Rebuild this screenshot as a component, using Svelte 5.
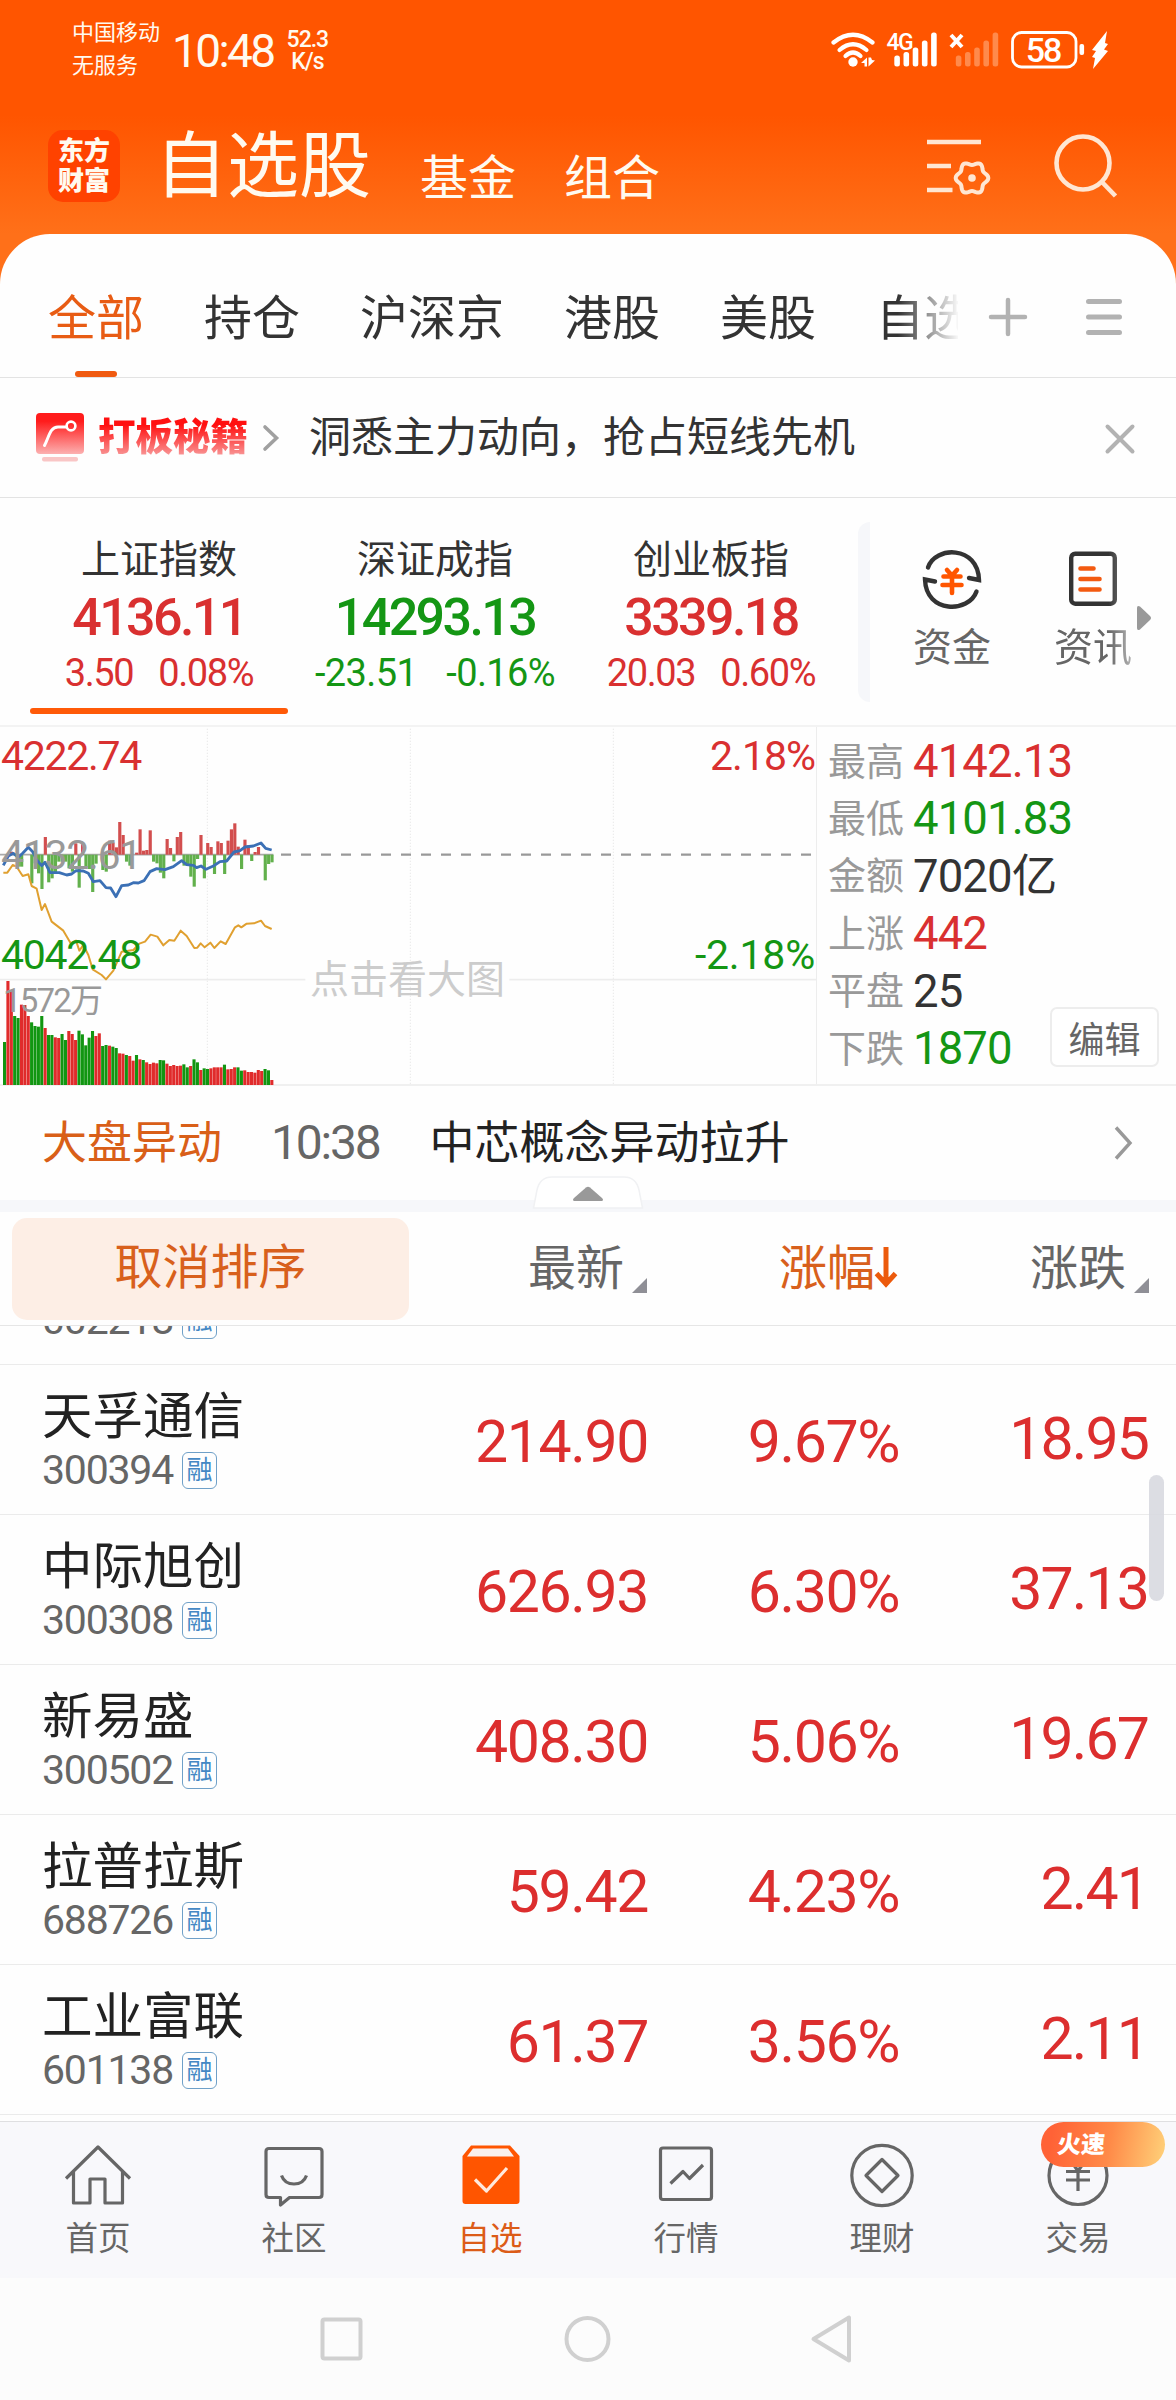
<script lang="ts">
  type Tone = 'up' | 'down' | 'flat';

  const tabs = ['全部', '持仓', '沪深京', '港股', '美股', '自选'];

  const indexes: { name: string; value: string; diff: string; pct: string; tone: Tone }[] = [
    { name: '上证指数', value: '4136.11', diff: '3.50', pct: '0.08%', tone: 'up' },
    { name: '深证成指', value: '14293.13', diff: '-23.51', pct: '-0.16%', tone: 'down' },
    { name: '创业板指', value: '3339.18', diff: '20.03', pct: '0.60%', tone: 'up' },
  ];

  const stats: { label: string; value: string; tone: Tone }[] = [
    { label: '最高', value: '4142.13', tone: 'up' },
    { label: '最低', value: '4101.83', tone: 'down' },
    { label: '金额', value: '7020亿', tone: 'flat' },
    { label: '上涨', value: '442', tone: 'up' },
    { label: '平盘', value: '25', tone: 'flat' },
    { label: '下跌', value: '1870', tone: 'down' },
  ];

  const stocks = [
    { name: '', code: '002218', price: '', pct: '', diff: '' },
    { name: '天孚通信', code: '300394', price: '214.90', pct: '9.67%', diff: '18.95' },
    { name: '中际旭创', code: '300308', price: '626.93', pct: '6.30%', diff: '37.13' },
    { name: '新易盛', code: '300502', price: '408.30', pct: '5.06%', diff: '19.67' },
    { name: '拉普拉斯', code: '688726', price: '59.42', pct: '4.23%', diff: '2.41' },
    { name: '工业富联', code: '601138', price: '61.37', pct: '3.56%', diff: '2.11' },
  ];

  const nav = ['首页', '社区', '自选', '行情', '理财', '交易'];
  const signal = [11, 14.5, 19, 26, 34];

  // chart data, in thirds of a pixel
  const step = 10.15;
  const volColors = 'grrggrrrggggrggrrggrrrgggggrrggrggrrgrrgrgrrrrggrrrrrggrggrggrrrrgrrrggrrrrrrggr';
  const volTops = [
    246, 63, 93, 168, 174, 134, 135, 168, 187, 198, 200, 168, 204, 225, 225, 232, 234, 222, 240, 213,
    222, 240, 212, 223, 256, 233, 213, 228, 220, 258, 255, 257, 260, 264, 280, 281, 285, 288, 302, 285,
    298, 300, 307, 312, 308, 310, 300, 301, 311, 318, 315, 318, 317, 313, 322, 318, 298, 307, 330, 325,
    327, 325, 322, 322, 322, 314, 328, 327, 322, 322, 332, 331, 336, 336, 338, 330, 333, 327, 331, 360,
  ];
  const force = [
    0, 0, 9, 0, -36, -36, 0, 0, -86, -26, -56, -103, 53, -83, -71, -56, -21, -21, -21, -41,
    -51, 34, -99, 34, -36, -43, -112, -27, 0, -46, -51, 42, 36, 22, 98, 59, -21, -33, 0, 6,
    76, 12, 14, 73, -21, -26, -54, -71, 47, 20, -20, 53, 68, -33, -33, -66, -96, -13, 59, -71,
    35, 23, -58, 40, 35, -58, 42, 76, 94, 24, -43, 45, 28, -19, 8, 23, 0, -77, -28, -23,
  ];
  const priceLine =
    '10,436 25,408 40,400 55,412 68,400 85,382 98,395 110,420 125,437 135,427 150,458 178,458 200,465 215,462 228,452 250,453 265,460 280,485 300,482 318,503 332,504 348,530 365,497 385,495 400,488 415,489 432,482 450,455 470,446 495,449 520,440 545,422 560,434 580,436 590,443 603,438 618,448 640,438 660,425 680,423 702,396 720,392 735,381 760,378 783,369 797,385 815,390';
  const avgLine =
    '10,458 22,458 38,435 50,440 68,468 85,463 95,498 110,506 125,570 135,552 155,605 190,632 212,670 228,662 238,692 250,675 265,705 278,748 305,765 318,778 340,752 365,695 400,690 418,671 435,665 452,644 472,650 490,676 508,660 523,662 542,632 560,648 583,684 592,683 602,670 614,682 631,668 643,684 662,664 677,672 705,622 715,616 724,622 740,611 762,610 783,602 795,618 815,627';

  const gear = Array.from({ length: 72 }, (_, i) => {
    const a = (i / 72) * Math.PI * 2;
    const r = 14.6 + 1.7 * Math.cos(6 * a);
    return `${45 + r * Math.cos(a)},${39 + r * Math.sin(a)}`;
  }).join(' ');
</script>

<div class="screen">
  <header>
    <div class="status">
      <div class="carrier"><span>中国移动</span><span>无服务</span></div>
      <span class="clock">10:48</span>
      <div class="speed"><span>52.3</span><span>K/s</span></div>
      <svg class="sys" width="280" height="40" viewBox="830 30 280 40">
        <g fill="none" stroke="#fff" stroke-width="4.200" stroke-linecap="round">
          <path d="M833.500 42.500Q853 27 872.500 42.500" />
          <path d="M839.500 50Q853 38.500 866.500 50" />
          <path d="M845.500 56Q853 49 860.500 56" />
        </g>
        <circle cx="853" cy="62" r="4.700" fill="#fff" />
        <path d="M861 63l6-5.500v9h-2.500V63zM868.500 57.500v9l6.500-6-3-.500-1-2.500z" fill="#fff" />
        <text x="886.500" y="49.500" class="gen">4G</text>
        {#each signal as h, i}
          <rect x={894.3 + i * 9.2} y={66.5 - h} width="5.600" height={h} rx="2.500" fill="#fff" />
          <rect x={955.8 + i * 9.2} y={66.5 - h} width="5.600" height={h} rx="2.500" fill="#ff8a4c" />
        {/each}
        <path d="M951 35l11 12M962 35l-11 12" stroke="#fff" stroke-width="4" />
        <rect x="1012.500" y="32.500" width="63.500" height="34.500" rx="9" fill="none" stroke="#fff" stroke-width="2.800" />
        <text x="1043" y="61.500" class="level">58</text>
        <rect x="1079.500" y="44" width="4.600" height="11" rx="2" fill="#fff" />
        <path d="M1107 31l-15 19 4 1-4 6 3 1-2 11 15-18-4-1.500 4-5.500-3-1z" fill="#fff" />
      </svg>
    </div>
    <div class="title-bar">
      <div class="logo"><span>东方</span><span>财富</span></div>
      <h1>自选股</h1>
      <span class="sub">基金</span>
      <span class="sub">组合</span>
      <svg class="manage" width="64" height="60" viewBox="0 0 64 60" fill="none" stroke="#ffe6d2" stroke-width="4.600">
        <path d="M0 3h54M0 27h24M0 51h25.500" />
        <polygon points={gear} stroke-width="4" />
        <circle cx="45" cy="39" r="3.800" fill="#ffe6d2" stroke="none" />
      </svg>
      <svg class="search" width="66" height="66" viewBox="0 0 66 66" fill="none" stroke="#ffe6d2" stroke-width="4.600">
        <circle cx="30" cy="30" r="26.500" />
        <path d="M48.500 48.500l14 14.500" />
      </svg>
    </div>
  </header>

  <main>
    <nav class="tabs">
      <div class="tab-list">
        {#each tabs as tab, i}
          <span class="tab" class:active={i === 0}>{tab}</span>
        {/each}
      </div>
      <svg class="add" width="40" height="40" viewBox="0 0 40 40" stroke="#b2b2b2" stroke-width="4.500" stroke-linecap="round">
        <path d="M3 20h34M20 3v34" />
      </svg>
      <svg class="menu" width="40" height="40" viewBox="0 0 40 40" stroke="#b2b2b2" stroke-width="5" stroke-linecap="round">
        <path d="M4.500 4.500h31M4.500 20h31M4.500 35.500h31" />
      </svg>
    </nav>

    <div class="promo">
      <svg width="48" height="50" viewBox="0 0 48 50">
        <defs>
          <linearGradient id="redFade" x1="0" y1="0" x2="0" y2="1">
            <stop offset="0.200" stop-color="#ff1c1c" />
            <stop offset="1" stop-color="#fcb0b0" />
          </linearGradient>
        </defs>
        <rect width="48" height="41" rx="4" fill="url(#redFade)" />
        <rect x="6" y="44" width="36" height="4.500" rx="2" fill="#f9c6c6" />
        <path d="M8.500 32.500C13 24 14 14 22 14h8" fill="none" stroke="#fff" stroke-width="3" stroke-linecap="round" />
        <circle cx="35" cy="13" r="4.400" fill="none" stroke="#fff" stroke-width="2.600" />
      </svg>
      <span class="brand">打板秘籍</span>
      <svg class="arrow" width="18" height="30" viewBox="0 0 18 30" fill="none" stroke="#a0a0a0" stroke-width="3.600" stroke-linecap="round">
        <path d="M3 4l11.500 11L3 26" />
      </svg>
      <span class="slogan">洞悉主力动向，抢占短线先机</span>
      <svg class="close" width="32" height="32" viewBox="0 0 32 32" stroke="#b2b2b2" stroke-width="4" stroke-linecap="round">
        <path d="M3.500 3.500l25 25M28.500 3.500l-25 25" />
      </svg>
    </div>

    <section class="indexes">
      {#each indexes as item, i}
        <div class="index {item.tone}" class:active={i === 0}>
          <span class="name">{item.name}</span>
          <span class="value">{item.value}</span>
          <span class="change"><span>{item.diff}</span><span>{item.pct}</span></span>
        </div>
      {/each}
      <div class="shortcuts">
        <div class="shortcut">
          <svg width="64" height="64" viewBox="0 0 64 64" fill="none" stroke="#333" stroke-width="4.400" stroke-linecap="round">
            <path d="M8 20.500C15 -1 58 -2 59 33l-10-2" />
            <path d="M56.500 44.500C49 66 6 67 5 32.500l10 2" />
            <path d="M27 23l5 5.500 5-5.500M23.500 29.500h17M22.500 38h19M32 29v17" stroke="#ff5500" stroke-width="4.600" />
          </svg>
          <span>资金</span>
        </div>
        <div class="shortcut fade">
          <svg width="64" height="64" viewBox="0 0 64 64" fill="none" stroke="#333" stroke-width="4.400" stroke-linecap="round">
            <rect x="10.200" y="6.700" width="43.600" height="50" rx="4" />
            <path d="M19.500 21.500h13M19.500 32h19M19.500 42.500h19" stroke="#f35a10" stroke-width="4.600" />
          </svg>
          <span>资讯</span>
        </div>
        <svg class="more" width="16" height="26" viewBox="0 0 16 26">
          <path d="M1 3q0-3 3-1.500l10 9.500q2 2 0 4L4 24.500q-3 1.500-3-1.500z" fill="#999" />
        </svg>
      </div>
    </section>

    <section class="market">
      <div class="chart">
        <svg width="817" height="358" viewBox="0 21 2451 1074">
          <g stroke="#e8e8e8" stroke-width="3" stroke-dasharray="4 5">
            <path d="M622 26V1092M1231 26V1092M1840 26V1092" />
          </g>
          <path d="M0 779H916M1528 779H2451" stroke="#ededed" stroke-width="5" />
          <path d="M0 404H820" stroke="#aaa" stroke-width="5" />
          <path d="M843 404H2436" stroke="#999" stroke-width="7" stroke-dasharray="30 30" />
          {#each force as v, i}
            {#if v !== 0}
              <rect
                x={i * step + 9.5}
                y={v > 0 ? 404 - v : 404}
                width="9.500"
                height={Math.abs(v)}
                fill={v > 0 ? '#d24e4e' : '#62b04c'}
              />
            {/if}
          {/each}
          {#each volTops as top, i}
            <rect
              x={i * step + 9}
              y={720 + top}
              width="9.300"
              height={375 - top}
              fill={volColors[i] === 'r' ? '#e02b2b' : '#119611'}
            />
          {/each}
          <polyline points={avgLine} fill="none" stroke="#e0a030" stroke-width="6" stroke-linejoin="round" />
          <polyline points={priceLine} fill="none" stroke="#3b70b5" stroke-width="8.500" stroke-linejoin="round" />
        </svg>
        <span class="mark high up">4222.74</span>
        <span class="mark high end up">2.18%</span>
        <span class="mark mid">4132.61</span>
        <span class="mark low down">4042.48</span>
        <span class="mark low end down">-2.18%</span>
        <span class="mark vol">1572万</span>
        <span class="mark hint">点击看大图</span>
      </div>
      <div class="stats">
        {#each stats as s}
          <div class="stat"><span class="label">{s.label}</span><span class="num {s.tone}">{s.value}</span></div>
        {/each}
        <button class="edit">编辑</button>
      </div>
    </section>

    <div class="news">
      <span class="tag">大盘异动</span>
      <span class="time">10:38</span>
      <span class="headline">中芯概念异动拉升</span>
      <svg width="20" height="36" viewBox="0 0 20 36" fill="none" stroke="#999" stroke-width="3.400">
        <path d="M2 2.500l14 15.500L2 33.500" />
      </svg>
    </div>

    <div class="divider">
      <svg width="112" height="34" viewBox="0 0 112 34">
        <path d="M1.500 32L5 14Q8 1 20 1H92Q104 1 107 14L110.500 32z" fill="#fff" stroke="#f0f1f3" stroke-width="1.500" />
        <path d="M42 25q-2-1 0-3L54 11.500q2-1.500 4 0L70 22q2 2 0 3z" fill="#999" />
      </svg>
    </div>

    <div class="columns">
      <button class="reset">取消排序</button>
      <div class="col">最新<i class="corner"></i></div>
      <div class="col sorted">
        涨幅<svg width="24" height="44" viewBox="0 0 24 44" fill="none" stroke="#ec5a0c" stroke-width="5">
          <path d="M12 1v35M2.500 27.500L12 38l9.500-10.500" /><path d="M5 31h14l-7 10z" fill="#ec5a0c" stroke="none" />
        </svg>
      </div>
      <div class="col">涨跌<i class="corner"></i></div>
    </div>

    <section class="list">
      {#each stocks as stock}
        <div class="row">
          <div class="who">
            <span class="stock">{stock.name}</span>
            <span class="code">{stock.code}<em>融</em></span>
          </div>
          <span class="cell">{stock.price}</span>
          <span class="cell">{stock.pct}</span>
          <span class="cell last">{stock.diff}</span>
        </div>
      {/each}
      <div class="scrollbar"></div>
    </section>
  </main>

  <footer>
    {#each nav as label, i}
      <div class="item" class:active={i === 2}>
        <svg width="72" height="72" viewBox="0 0 72 72" fill="none" stroke="#666" stroke-width="3.200" stroke-linejoin="round">
          {#if i === 0}
            <path d="M4 38.500L36 7l32 31.500M11.500 32v31h16.500V39h15v24h17.500V32" />
          {:else if i === 1}
            <path d="M11 8.500h50q3 0 3 3v43q0 3-3 3H31.500l-9 7.500v-7.500H11q-3 0-3-3v-43q0-3 3-3z" />
            <path d="M23.500 35.500Q26.500 44 36 44t12.500-8.500" />
          {:else if i === 2}
            <g transform="translate(1.5 0)">
              <path d="M7 16l8.500-10.500h39L64 16v45q0 3-3 3h-51q-3 0-3-3z" fill="#ff5500" stroke="none" />
              <path d="M11.500 16.500l6-8h35l6 8z" fill="#f9f0ec" stroke="none" />
              <path d="M19.500 39.500L31 51l20.500-23" stroke="#ffe9dc" />
            </g>
          {:else if i === 3}
            <rect x="10.500" y="8" width="51" height="51.500" rx="2.500" />
            <path d="M20.500 43.500L33 31.500l6.500 7L53 25" />
          {:else if i === 4}
            <circle cx="36" cy="35.500" r="30.200" />
            <path d="M36 19.500l16 16-16 16-16-16z" />
          {:else}
            <circle cx="36" cy="35.500" r="29" />
            <path d="M29 21l7 10 7-10M24 31.500h24M24 40h24M36 31v20" />
          {/if}
        </svg>
        <span>{label}</span>
        {#if i === 5}<b class="hot"><span>火速</span></b>{/if}
      </div>
    {/each}
  </footer>

  <div class="keys">
    <svg width="540" height="50" viewBox="0 0 540 50" fill="none" stroke="#d0d0d0" stroke-width="4" stroke-linejoin="round">
      <rect x="4.500" y="5.500" width="38" height="39" rx="2" />
      <circle cx="269.500" cy="25" r="21" />
      <path d="M495.500 25L531 3.500v43z" />
    </svg>
  </div>
</div>

<style>
  :global(body) {
    margin: 0;
    background: #fff;
  }

  .screen {
    width: 1176px;
    height: 2400px;
    display: flex;
    flex-direction: column;
    overflow: hidden;
    font-family: Roboto, 'Noto Sans CJK SC', sans-serif;
    color: #333;
    background: #fefefe;
    white-space: nowrap;
  }

  span {
    line-height: 1;
  }

  svg {
    display: block;
    flex: none;
  }

  .up {
    color: #d93030;
  }

  .down {
    color: #149614;
  }

  .flat {
    color: #333;
  }

  header {
    height: 284px;
    margin-bottom: -50px;
    background: linear-gradient(#ff5500 115px, #ff7019 234px);
    color: #fffaf0;
  }

  .status {
    display: flex;
    height: 100px;
    padding: 0 66px 0 72px;
  }

  .carrier {
    display: flex;
    flex-direction: column;
    gap: 11px;
    padding-top: 22px;
    font-size: 22px;
  }

  .clock {
    margin: 28px 0 0 12px;
    font-size: 46px;
    letter-spacing: -2.600px;
  }

  .speed {
    display: flex;
    flex-direction: column;
    align-items: center;
    margin: 29px 0 0 13px;
    font-size: 23px;
    font-weight: 500;
    letter-spacing: -1px;
  }

  .speed span {
    line-height: 22px;
  }

  .sys {
    margin: 30px 0 0 auto;
  }

  .gen {
    font-size: 23px;
    font-weight: 500;
    letter-spacing: -1.500px;
    fill: #fff;
  }

  .level {
    font-size: 34px;
    font-weight: 500;
    letter-spacing: -2px;
    text-anchor: middle;
    fill: #fff;
  }

  .title-bar {
    display: flex;
    padding-left: 48px;
  }

  .logo {
    display: flex;
    flex-direction: column;
    align-items: center;
    justify-content: center;
    gap: 4px;
    width: 72px;
    height: 72px;
    margin-top: 30px;
    border-radius: 15px;
    background: #ff4200;
    font-size: 26px;
    font-weight: 900;
  }

  h1 {
    margin: 31px 0 0 35px;
    font-size: 72px;
    font-weight: 400;
    line-height: 72px;
  }

  .sub {
    margin: 55px 0 0 48px;
    font-size: 48px;
  }

  h1 + .sub {
    margin-left: 49px;
  }

  .manage {
    margin: 39px 0 0 267px;
  }

  .search {
    margin: 33px 0 0 62px;
  }

  main {
    display: flex;
    flex-direction: column;
    height: 1887px;
    border-radius: 50px 50px 0 0;
    background: #fefefe;
    overflow: hidden;
  }

  .tabs {
    display: flex;
    align-items: center;
    height: 143px;
    padding-left: 48px;
    border-bottom: 1px solid #e3e3e3;
  }

  .tab-list {
    display: flex;
    gap: 60px;
    width: 910px;
    height: 143px;
    overflow: hidden;
    mask-image: linear-gradient(90deg, #000 850px, transparent 912px);
  }

  .tab {
    flex: none;
    position: relative;
    font-size: 48px;
    line-height: 170px;
  }

  .tab.active {
    color: #e85c14;
  }

  .tab.active::after {
    content: '';
    position: absolute;
    left: 27px;
    top: 137px;
    width: 42px;
    height: 6px;
    border-radius: 3px;
    background: #f05a10;
  }

  .add {
    margin: 23px 0 0 30px;
  }

  .menu {
    margin: 23px 0 0 56px;
  }

  .promo {
    display: flex;
    align-items: center;
    height: 119px;
    padding: 0 40px 0 36px;
    border-bottom: 1px solid #e3e3e3;
  }

  .brand {
    margin: 0 0 1px 14px;
    font-size: 37.500px;
    font-weight: 900;
    line-height: 48px;
    background: linear-gradient(#ff1010 25%, #f8a4a4 95%);
    background-clip: text;
    color: transparent;
  }

  .arrow {
    margin: 1px 0 0 14px;
  }

  .slogan {
    margin-left: 29px;
    font-size: 42px;
  }

  .close {
    margin: 2px 0 0 auto;
  }

  .indexes {
    display: flex;
    height: 227px;
    padding-left: 21px;
    border-bottom: 2px solid #f3f3f3;
  }

  .index {
    position: relative;
    display: flex;
    flex-direction: column;
    align-items: center;
    width: 276px;
    padding-top: 43px;
    box-sizing: border-box;
  }

  .index.active::after {
    content: '';
    position: absolute;
    left: 9px;
    right: 9px;
    bottom: 11px;
    height: 6px;
    border-radius: 3px;
    background: #ff5a08;
  }

  .index .name {
    font-size: 39px;
    color: #333;
  }

  .index .value {
    margin-top: 12px;
    font-size: 52px;
    font-weight: 500;
    letter-spacing: -2.600px;
  }

  .index .change {
    display: flex;
    gap: 25px;
    margin-top: 10px;
    font-size: 38px;
    letter-spacing: -1.400px;
  }

  .index.down .change {
    gap: 29px;
    letter-spacing: -0.600px;
  }

  .shortcuts {
    position: relative;
    display: flex;
    margin: 24px 0 0 9px;
    width: 318px;
    height: 180px;
  }

  .shortcuts::before {
    content: '';
    width: 12px;
    border-radius: 12px 0 0 12px;
    background: #f6f7fa;
  }

  .shortcut {
    display: flex;
    flex-direction: column;
    align-items: center;
    gap: 18px;
    width: 78px;
    padding-top: 25px;
    margin-left: 43px;
    font-size: 39px;
    color: #666;
  }

  .shortcut.fade {
    margin-left: 63px;
    mask-image: linear-gradient(90deg, #000 70%, rgba(0, 0, 0, 0.5));
  }

  .more {
    position: absolute;
    right: 24px;
    top: 83px;
  }

  .market {
    display: flex;
    height: 357px;
    border-bottom: 2px solid #f0f0f0;
  }

  .chart {
    position: relative;
    width: 816px;
  }

  .mark {
    position: absolute;
    left: 1px;
    font-size: 41px;
    letter-spacing: -1.300px;
  }

  .mark.high {
    top: 9px;
  }

  .mark.low {
    top: 208px;
  }

  .mark.mid {
    top: 108px;
    color: #999;
  }

  .mark.end {
    left: auto;
    right: 1px;
    letter-spacing: -1px;
  }

  .mark.low.end {
    letter-spacing: -0.200px;
  }

  .mark.vol {
    left: 3px;
    top: 257px;
    font-size: 33px;
    letter-spacing: -1.800px;
    color: #999;
  }

  .mark.hint {
    left: 310px;
    top: 234px;
    font-size: 39px;
    letter-spacing: 0;
    color: #ccc;
  }

  .stats {
    position: relative;
    flex: 1;
    padding: 6px 0 0 11px;
    border-left: 1px solid #ededed;
  }

  .stat {
    display: flex;
    align-items: center;
    gap: 9px;
    height: 57.400px;
  }

  .stat .label {
    font-size: 38px;
    color: #999;
  }

  .stat .num {
    font-size: 45.500px;
    letter-spacing: -0.900px;
  }

  .edit {
    position: absolute;
    right: 17px;
    bottom: 17px;
    width: 109px;
    height: 60px;
    padding: 0;
    border: 2px solid #ededed;
    border-radius: 7px;
    background: #fff;
    font: 36px Roboto, 'Noto Sans CJK SC', sans-serif;
    color: #666;
  }

  .news {
    display: flex;
    align-items: center;
    height: 114px;
    padding: 0 42px 0 42px;
    font-size: 45px;
  }

  .tag {
    color: #d95f18;
  }

  .time {
    margin: 0 0 0 49px;
    font-size: 48px;
    letter-spacing: -2.200px;
    color: #666;
  }

  .headline {
    margin-left: 50px;
    color: #222;
  }

  .news svg {
    margin-left: auto;
  }

  .divider {
    position: relative;
    height: 12px;
    background: #f6f7fa;
  }

  .divider svg {
    position: absolute;
    left: 532px;
    bottom: 2px;
  }

  .columns {
    display: flex;
    height: 113px;
    padding-left: 12px;
    border-bottom: 1px solid #e6e6e6;
    font-size: 48px;
    line-height: 113px;
    color: #666;
  }

  .reset {
    flex: none;
    width: 397px;
    height: 102px;
    margin: 6px 119px 0 0;
    padding: 0 0 2px;
    border: 0;
    border-radius: 15px;
    background: #fdeee5;
    font: 48px/1 Roboto, 'Noto Sans CJK SC', sans-serif;
    color: #d8601c;
  }

  .col {
    display: flex;
    flex: none;
    width: 251px;
  }

  .col:last-child {
    width: 130px;
  }

  .sorted {
    color: #d8601c;
  }

  .sorted svg {
    margin: 34px 0 0 -1px;
  }

  .corner {
    width: 15px;
    height: 15px;
    margin: 66px 0 0 8px;
    background: #8f8f96;
    clip-path: polygon(100% 0, 100% 100%, 0 100%);
  }

  .list {
    position: relative;
    display: flex;
    flex: 1;
    flex-direction: column;
    justify-content: flex-end;
    overflow: hidden;
    padding-bottom: 6px;
  }

  .row {
    flex: none;
    display: grid;
    grid-template-columns: 366px 282px 251px 249px;
    height: 149px;
    border-bottom: 1px solid #ebebeb;
  }

  .who {
    display: flex;
    flex-direction: column;
    padding: 27px 0 0 42px;
  }

  .stock {
    height: 50.500px;
    font-size: 50.500px;
    color: #222;
  }

  .code {
    display: flex;
    align-items: center;
    margin-top: 7px;
    font-size: 41px;
    letter-spacing: -1.200px;
    color: #666;
  }

  .code em {
    box-sizing: border-box;
    width: 35px;
    height: 37px;
    margin: 0 0 0 9px;
    border: 1.500px solid #6fa0c8;
    border-radius: 6px;
    font-size: 26px;
    font-style: normal;
    line-height: 35px;
    text-align: center;
    letter-spacing: 0;
    color: #4488c4;
  }

  .cell {
    font-size: 59px;
    line-height: 153px;
    text-align: right;
    letter-spacing: -1.400px;
    color: #dc2e2e;
  }

  .cell.last {
    line-height: 147px;
    letter-spacing: -1.900px;
  }

  .scrollbar {
    position: absolute;
    left: 1149px;
    top: 149px;
    width: 15px;
    height: 126px;
    border-radius: 8px;
    background: rgba(215, 216, 223, 0.88);
  }

  footer {
    display: flex;
    height: 156px;
    border-top: 1px solid #dfdfe1;
    background: #f8f8fb;
  }

  .item {
    position: relative;
    display: flex;
    flex-direction: column;
    align-items: center;
    width: 196px;
    padding-top: 18px;
    font-size: 32.500px;
    color: #666;
  }

  .item > span {
    margin-top: 11px;
  }

  .item svg {
    margin-left: -1px;
  }

  .item.active {
    color: #dc5c18;
  }

  .hot {
    position: absolute;
    left: 61px;
    top: 0;
    width: 124px;
    height: 45px;
    box-sizing: border-box;
    padding-left: 16px;
    border-radius: 23px;
    background: linear-gradient(100deg, #ff6236 10%, #ff8a48 55%, #ffd27a);
    font-size: 24px;
    font-weight: 900;
    line-height: 47px;
    color: #fff;
  }

  .hot span {
    display: inline-block;
    transform: skewX(-4deg);
  }

  .keys {
    display: flex;
    flex: 1;
    justify-content: center;
    padding-top: 36px;
    background: #fcfcfc;
  }
</style>
